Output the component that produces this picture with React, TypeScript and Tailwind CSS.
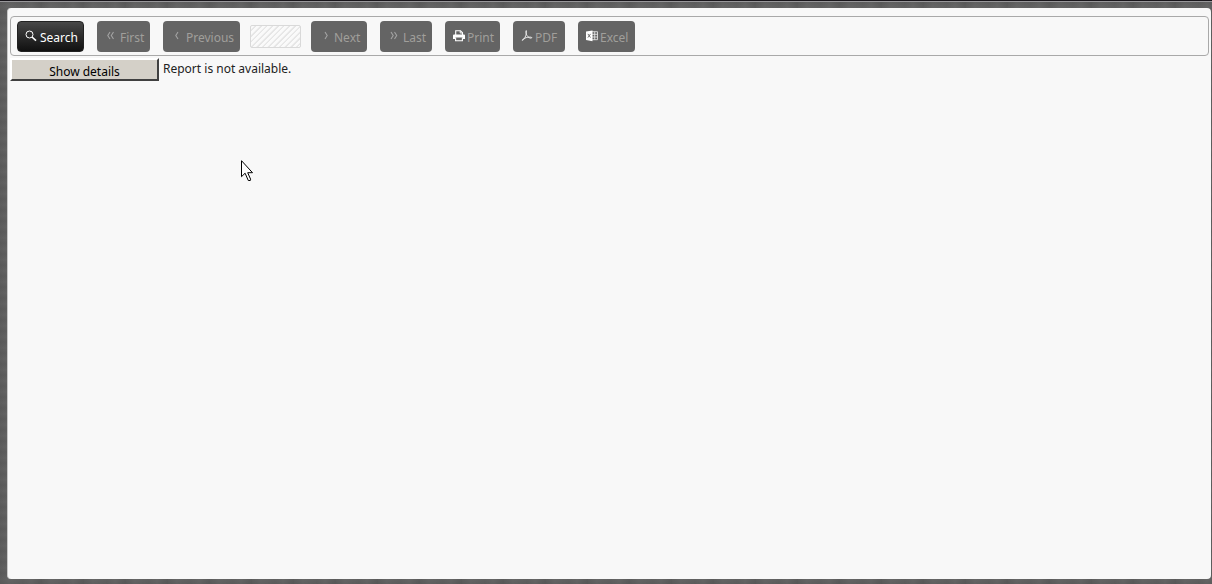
import type { ReactNode } from 'react';
import clsx from 'clsx';

interface ToolButtonProps {
    label: string;
    icon: ReactNode;
    className: string;
    disabled?: boolean;
}

function ToolButton({ label, icon, className, disabled = true }: ToolButtonProps) {
    return (
        <button
            type="button"
            disabled={disabled}
            className={clsx(
                'flex h-[31px] shrink-0 items-center rounded-[4px] text-[12px] leading-5',
                disabled
                    ? 'bg-[#646464] pl-2 text-[#a09f9b]'
                    : 'border border-[#222222] bg-linear-to-b from-[#484848] to-[#111111] pl-[7px] text-white',
                className,
            )}
        >
            {icon}
            <span className="pt-1">{label}</span>
        </button>
    );
}

function SearchIcon() {
    return (
        <svg className="mr-[3px] h-3 w-3" viewBox="0 0 12 12" fill="none" stroke="#ffffff" aria-hidden="true">
            <circle cx="4.5" cy="4.5" r="3.5" strokeWidth="1" />
            <path d="M7 7l4 3.7" strokeWidth="1.6" />
        </svg>
    );
}

function ChevronIcon({ path }: { path: string }) {
    return (
        <svg className="mr-[3px] h-3 w-3" viewBox="0 0 12 12" fill="none" stroke="#a3a3a3" strokeWidth="1.1" aria-hidden="true">
            <path d={path} />
        </svg>
    );
}

function PrintIcon() {
    return (
        <svg className="mr-[2px] h-3 w-3" viewBox="0 0 12 12" aria-hidden="true">
            <path d="M2.7 5V.8h4.8l2 1.9V5" fill="none" stroke="#ffffff" strokeWidth="1.1" />
            <path d="M7.2.8v2.2h2.3" fill="none" stroke="#ffffff" strokeWidth=".9" />
            <path d="M0 5.4Q0 4.4 1 4.4h10q1 0 1 1v3.5H9.8V7.4H2.2v1.5H0z" fill="#ffffff" />
            <path d="M2.6 7.4v3.4h6.8V7.4" fill="none" stroke="#ffffff" strokeWidth="1.1" />
        </svg>
    );
}

function PdfIcon() {
    return (
        <svg className="mr-[2px] h-3 w-3" viewBox="0 0 12 12" fill="none" stroke="#f4f4f4" strokeLinecap="round" aria-hidden="true">
            <path d="M5.2 1c-.7.2-.4 1.8.3 3.500.7 1.700 2 3 3.400 3.500 1.300.4 2.100 0 1.800-.5-.5-.6-3.400-.5-5.600.2-2.100.7-3.900 1.700-3.900 2.500.1.800 1.700-.5 2.900-2.900C5.200 5 6 1 5.200 1z" strokeWidth=".9" />
        </svg>
    );
}

function ExcelIcon() {
    return (
        <svg className="mr-[2px] h-3 w-3" viewBox="0 0 12 12" aria-hidden="true">
            <path d="M6 1.700h5.500v8H6M6 4.300h5.500M6 7h5.500M8.700 1.700v8" fill="none" stroke="#eeeeee" strokeWidth=".8" />
            <path d="M0 1.500L6.500.4v10.800L0 10z" fill="#ffffff" />
            <path d="M1.900 3.900l2.600 3.700M4.500 3.900L1.900 7.600" stroke="#646464" strokeWidth=".9" />
        </svg>
    );
}

export default function App() {
    return (
        <div className="flex min-h-screen flex-col border-t border-[#18151a] bg-[#5f5f5f] bg-[repeating-linear-gradient(90deg,rgba(0,0,0,0.08)_0px,transparent_9px,rgba(0,0,0,0.05)_23px,transparent_31px,rgba(0,0,0,0.1)_42px),repeating-linear-gradient(0deg,transparent_0px,rgba(255,255,255,0.04)_5px,transparent_11px)] font-['Noto_Sans','Open_Sans',sans-serif] text-[#222222]">
            <div className="h-px bg-[#98979a]" />
            <main className="mt-[6px] mr-px mb-[5px] ml-[7px] flex-1 rounded-[4px] border-l border-[#c8c8c8] bg-[#f8f8f8] pt-2 pr-[2px] pl-[2px]">
                {/* Report toolbar */}
                <div className="flex h-10 items-center gap-[13px] rounded-[4px] border border-[#a9a9a9] px-[6px]">
                    <ToolButton label="Search" icon={<SearchIcon />} className="w-[67px]" disabled={false} />
                    <ToolButton label="First" icon={<ChevronIcon path="M5 2L2.800 5.500 5 9M8.500 2L6.300 5.500l2.200 3.500" />} className="w-[53px]" />
                    <div className="flex items-center gap-[10px]">
                        <ToolButton label="Previous" icon={<ChevronIcon path="M7 2L4.800 5.500 7 9" />} className="w-[77px]" />
                        <input
                            type="text"
                            disabled
                            aria-label="Page"
                            className="h-[23px] w-[51px] rounded-[2px] border border-[#d9d9d9] bg-[#fafafa] bg-[repeating-linear-gradient(135deg,#fafafa_0px,#fafafa_2px,#e6e6e6_3px,#e6e6e6_4px)]"
                        />
                        <ToolButton label="Next" icon={<ChevronIcon path="M6 2l2.200 3.500L6 9" />} className="w-[56px]" />
                    </div>
                    <ToolButton label="Last" icon={<ChevronIcon path="M3 2l2.200 3.500L3 9M6.500 2l2.200 3.500L6.500 9" />} className="w-[52px]" />
                    <ToolButton label="Print" icon={<PrintIcon />} className="w-[55px]" />
                    <ToolButton label="PDF" icon={<PdfIcon />} className="w-[52px]" />
                    <ToolButton label="Excel" icon={<ExcelIcon />} className="w-[57px]" />
                </div>

                {/* Report status */}
                <div className="flex items-start gap-1 pt-[2px] text-[12px] leading-[22px]">
                    <button
                        type="button"
                        className="h-[23px] w-[149px] border-2 border-t-white border-r-[#404040] border-b-[#404040] border-l-white bg-[#d4d0c8] pt-px text-black"
                    >
                        Show details
                    </button>
                    <p>Report is not available.</p>
                </div>
            </main>

            {/* Mouse pointer */}
            <svg className="pointer-events-none absolute top-[160px] left-[241px] h-[22px] w-3" viewBox="0 0 12 22" aria-hidden="true">
                <path d="M.5.700v16l3.600-3.500 3.200 7.300h2l.3-1.300-2.900-6.500h4.800z" fill="#ffffff" stroke="#000000" />
            </svg>
        </div>
    );
}
